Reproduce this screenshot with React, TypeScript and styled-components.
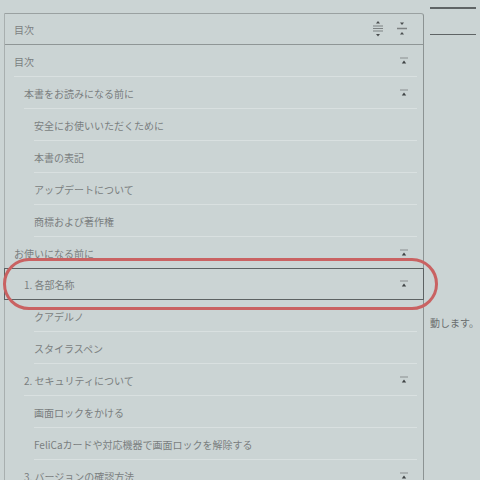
import React, { FC } from 'react';
import styled, { createGlobalStyle } from 'styled-components';

const GlobalStyle = createGlobalStyle`
  html, body {
    margin: 0;
    padding: 0;
    background: #cbd4d4;
    font-family: "Noto Sans CJK JP", "Noto Sans", sans-serif;
    overflow: hidden;
  }
`;

interface Item {
  label: string;
  level: number;
  parent?: boolean;
  selected?: boolean;
}

const items: Item[] = [
  { label: '目次', level: 0, parent: true },
  { label: '本書をお読みになる前に', level: 1, parent: true },
  { label: '安全にお使いいただくために', level: 2 },
  { label: '本書の表記', level: 2 },
  { label: 'アップデートについて', level: 2 },
  { label: '商標および著作権', level: 2 },
  { label: 'お使いになる前に', level: 0, parent: true },
  { label: '1. 各部名称', level: 1, parent: true, selected: true },
  { label: 'クアデルノ', level: 2 },
  { label: 'スタイラスペン', level: 2 },
  { label: '2. セキュリティについて', level: 1, parent: true },
  { label: '画面ロックをかける', level: 2 },
  { label: 'FeliCaカードや対応機器で画面ロックを解除する', level: 2 },
  { label: '3. バージョンの確認方法', level: 1, parent: true },
];

const Page = styled.div`
  display: flex;
  height: 480px;
  padding-left: 4px;
`;

const Panel = styled.div`
  margin-top: 13px;
  width: 418px;
  border-top: 1px solid #9aa1a1;
  border-left: 1px solid #a8afaf;
  border-right: 1px solid #8c9393;
  border-top-right-radius: 3px;
  display: flex;
  flex-direction: column;
`;

const Header = styled.div`
  flex-shrink: 0;
  height: 30px;
  display: flex;
  align-items: center;
  padding: 0 9px;
  border-bottom: 1px solid #8f9696;
  font-size: 10px;
  color: #7d8182;
`;

const HeaderTitle = styled.span`
  flex: 1;
`;

const HeaderTools = styled.div`
  display: flex;
  align-items: center;
  gap: 12px;
  margin-right: 6px;
`;

const Row = styled.div<{ $level: number; $selected?: boolean }>`
  position: relative;
  flex-shrink: 0;
  height: 32px;
  box-sizing: border-box;
  display: flex;
  align-items: center;
  padding-left: ${(p) => 9 + p.$level * 10}px;
  padding-right: 14px;
  font-size: 10px;
  color: #7a7e7f;
  margin: ${(p) => (p.$selected ? '-1px -1px 0 -1px' : '0')};
  border: ${(p) => (p.$selected ? '1.5px solid #5d6263' : 'none')};

  &::after {
    content: '';
    position: absolute;
    left: ${(p) => 9 + p.$level * 10}px;
    right: 6px;
    bottom: 0;
    height: 1px;
    background: rgba(255, 255, 255, 0.28);
    display: ${(p) => (p.$selected ? 'none' : 'block')};
  }
`;

const Label = styled.span`
  flex: 1;
  white-space: nowrap;
`;

const Highlight = styled.div`
  position: absolute;
  left: -2px;
  right: -15px;
  top: -11px;
  bottom: -11px;
  border: 3.5px solid #c96262;
  border-radius: 27px;
  pointer-events: none;
`;

const Side = styled.div`
  display: flex;
  flex-direction: column;
  padding-left: 6px;
`;

const Rule = styled.div<{ $top: number }>`
  width: 46px;
  height: 1.5px;
  background: #5f6465;
  margin-top: ${(p) => p.$top}px;
`;

const SideText = styled.div`
  margin-top: 280px;
  font-size: 10px;
  color: #6a6e6f;
  white-space: nowrap;
`;

const CollapseIcon: FC = () => (
  <svg width="10" height="8" viewBox="0 0 10 8">
    <line x1="1" y1="1" x2="9" y2="1" stroke="#8a8f90" strokeWidth="1" />
    <polygon points="5,3.5 2.8,6.5 7.2,6.5" fill="#3f4344" />
  </svg>
);

const ExpandAllIcon: FC = () => (
  <svg width="12" height="18" viewBox="0 0 12 18">
    <polygon points="6,1 4,3.5 8,3.5" fill="#4a4e4f" />
    <line x1="1" y1="6" x2="11" y2="6" stroke="#7d8283" strokeWidth="1" />
    <line x1="1" y1="8.5" x2="11" y2="8.5" stroke="#7d8283" strokeWidth="1" />
    <line x1="1" y1="11" x2="11" y2="11" stroke="#7d8283" strokeWidth="1" />
    <polygon points="6,16.5 4,14 8,14" fill="#4a4e4f" />
  </svg>
);

const CollapseAllIcon: FC = () => (
  <svg width="12" height="18" viewBox="0 0 12 18">
    <polygon points="6,5 4,2.5 8,2.5" fill="#4a4e4f" />
    <line x1="1" y1="8.5" x2="11" y2="8.5" stroke="#7d8283" strokeWidth="1.5" />
    <polygon points="6,12 4,14.5 8,14.5" fill="#4a4e4f" />
  </svg>
);

const App: FC = () => (
  <>
    <GlobalStyle />
    <Page>
      <Panel>
        <Header>
          <HeaderTitle>目次</HeaderTitle>
          <HeaderTools>
            <ExpandAllIcon />
            <CollapseAllIcon />
          </HeaderTools>
        </Header>
        {items.map((item) => (
          <Row key={item.label} $level={item.level} $selected={item.selected}>
            <Label>{item.label}</Label>
            {item.parent && <CollapseIcon />}
            {item.selected && <Highlight />}
          </Row>
        ))}
      </Panel>
      <Side>
        <Rule $top={7} />
        <Rule $top={25} />
        <SideText>動します。</SideText>
      </Side>
    </Page>
  </>
);

export default App;
